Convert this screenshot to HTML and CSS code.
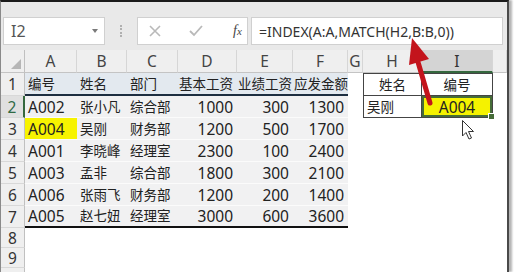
FILE: index.html
```html
<!DOCTYPE html>
<html lang="zh-CN">
<head>
    <meta charset="UTF-8">
    <meta name="viewport" content="width=device-width, initial-scale=1.0">
    <title>INDEX + MATCH</title>
    <link rel="stylesheet" href="styles.css">
</head>
<body>
<div class="window">
    <div class="formula-bar">
        <div class="name-box">
            <span>I2</span>
            <span class="drop"></span>
        </div>
        <div class="grip"></div>
        <div class="fx-buttons">
            <svg class="btn" width="12" height="12" viewBox="0 0 12 12">
                <path d="M1 1 L11 11 M11 1 L1 11" stroke="#b9b9b9" stroke-width="1.6"/>
            </svg>
            <svg class="btn" width="14" height="12" viewBox="0 0 14 12">
                <path d="M1 6 L5 10 L13 1" stroke="#b9b9b9" stroke-width="1.8" fill="none"/>
            </svg>
            <span class="fx"><i>f</i><i class="x">x</i></span>
        </div>
        <div class="formula">=INDEX(A:A,MATCH(H2,B:B,0))</div>
    </div>

    <div class="sheet">
        <div class="row colhead">
            <div class="corner"><span class="tri"></span></div>
            <div>A</div><div>B</div><div>C</div><div>D</div><div>E</div>
            <div>F</div><div>G</div><div>H</div><div class="active">I</div><div></div>
        </div>

        <div class="row r1">
            <div class="rh">1</div>
            <div class="hd cn">编号</div>
            <div class="hd cn">姓名</div>
            <div class="hd cn">部门</div>
            <div class="hd wide cn">基本工资</div>
            <div class="hd wide cn">业绩工资</div>
            <div class="hd wide cn">应发金额</div>
            <div></div>
            <div class="lk lk-l lk-t cn center">姓名</div>
            <div class="lk lk-t cn center">编号</div>
            <div></div>
        </div>

        <div class="row">
            <div class="rh current">2</div>
            <div class="t">A002</div>
            <div class="t cn">张小凡</div>
            <div class="t cn">综合部</div>
            <div class="t num">1000</div>
            <div class="t num">300</div>
            <div class="t num">1300</div>
            <div></div>
            <div class="lk lk-l cn">吴刚</div>
            <div class="lk sel center">A004</div>
            <div></div>
        </div>

        <div class="row">
            <div class="rh">3</div>
            <div class="t mark">A004</div>
            <div class="t cn">吴刚</div>
            <div class="t cn">财务部</div>
            <div class="t num">1200</div>
            <div class="t num">500</div>
            <div class="t num">1700</div>
            <div></div><div></div><div></div><div></div>
        </div>

        <div class="row">
            <div class="rh">4</div>
            <div class="t">A001</div>
            <div class="t cn">李晓峰</div>
            <div class="t cn">经理室</div>
            <div class="t num">2300</div>
            <div class="t num">100</div>
            <div class="t num">2400</div>
            <div></div><div></div><div></div><div></div>
        </div>

        <div class="row">
            <div class="rh">5</div>
            <div class="t">A003</div>
            <div class="t cn">孟非</div>
            <div class="t cn">综合部</div>
            <div class="t num">1800</div>
            <div class="t num">300</div>
            <div class="t num">2100</div>
            <div></div><div></div><div></div><div></div>
        </div>

        <div class="row">
            <div class="rh">6</div>
            <div class="t">A006</div>
            <div class="t cn">张雨飞</div>
            <div class="t cn">财务部</div>
            <div class="t num">1200</div>
            <div class="t num">200</div>
            <div class="t num">1400</div>
            <div></div><div></div><div></div><div></div>
        </div>

        <div class="row">
            <div class="rh">7</div>
            <div class="t last">A005</div>
            <div class="t last cn">赵七妞</div>
            <div class="t last cn">经理室</div>
            <div class="t last num">3000</div>
            <div class="t last num">600</div>
            <div class="t last num">3600</div>
            <div></div><div></div><div></div><div></div>
        </div>

        <div class="row r8"><div class="rh">8</div></div>
        <div class="row r9"><div class="rh">9</div></div>
        <div class="row r10"><div class="rh"></div></div>
    </div>

    <svg class="overlay" width="514" height="272" viewBox="0 0 514 272">
        <!-- red arrow pointing at the formula -->
        <line x1="430" y1="103" x2="418" y2="62" stroke="#c3141c" stroke-width="5" stroke-linecap="round"/>
        <polygon points="412,38 409,65 429,59" fill="#c3141c"/>
        <!-- mouse pointer -->
        <path d="M462.5 120.5 L462.5 136 L466 132.5 L469 139 L471.5 138 L468.5 131.5 L473.5 131.5 Z"
              fill="#fff" stroke="#333" stroke-width="1"/>
    </svg>
</div>
</body>
</html>
```

FILE: styles.css
```css
body {
    margin: 0;
    background: #fff;
    font-family: 'Noto Sans', 'Noto Sans CJK SC', sans-serif;
}
.window {
    position: relative;
    width: 506px;
    height: 270px;
    border-top: 2px solid #1b1b1b;
    border-left: 1px solid #8a8a8a;
    border-right: 2px solid #4a4a4a;
    box-shadow: 3px 0 2px #b4b4b4;
    overflow: hidden;
    background: #fff;
}

/* formula bar */
.formula-bar {
    display: flex;
    align-items: stretch;
    height: 28px;
    padding: 15px 4px 5px 2px;
    background: #e9e9e9;
}
.name-box {
    width: 102px;
    box-sizing: border-box;
    display: flex;
    align-items: center;
    justify-content: space-between;
    padding: 0 6px 0 7px;
    background: #fff;
    border: 1px solid #d0d0d0;
    font-size: 16px;
    color: #555;
}
.drop {
    width: 0;
    height: 0;
    border-left: 3px solid transparent;
    border-right: 3px solid transparent;
    border-top: 4px solid #7a7a7a;
}
.grip {
    width: 0;
    height: 12px;
    margin: 8px 15px 0 15px;
    border-left: 2px dotted #b0b0b0;
}
.fx-buttons {
    width: 111px;
    box-sizing: border-box;
    display: flex;
    align-items: center;
    padding-left: 11px;
    background: #fff;
    border: 1px solid #d0d0d0;
}
.btn {
    margin-right: 28px;
}
.fx {
    font-family: 'Liberation Serif', serif;
    font-size: 14px;
    color: #444;
    margin-left: 2px;
}
.fx .x {
    font-size: 11px;
}
.formula {
    flex: 1;
    margin-left: 3px;
    padding-left: 7px;
    display: flex;
    align-items: center;
    background: #fff;
    border: 1px solid #d0d0d0;
    font-size: 14px;
    color: #333;
}

/* grid */
.row {
    display: grid;
    grid-template-columns: 24px 52px 50px 51px 59px 56px 55px 15px 59px 71px 1fr;
    height: 22px;
}
.row > div {
    box-sizing: border-box;
    display: flex;
    align-items: center;
    padding: 0 3px;
    white-space: nowrap;
    overflow: hidden;
    font-size: 15.5px;
    line-height: 18px;
    color: #222;
}
.colhead {
    height: 23px;
}
.colhead > div {
    justify-content: center;
    background: #efefef;
    border-right: 1px solid #d6d6d6;
    border-bottom: 1px solid #c4c4c4;
    color: #444;
}
.colhead > div.active {
    background: #d4d4d4;
    border-bottom: 2px solid #35683e;
    color: #333;
}
.row > div.corner {
    justify-content: flex-end;
    align-items: flex-end;
    padding: 0 3px 3px 0;
    border-right: 1px solid #c0c0c0;
}
.tri {
    width: 0;
    height: 0;
    border-left: 10px solid transparent;
    border-bottom: 10px solid #b6b6b6;
}
.row > div.rh {
    justify-content: center;
    padding: 0;
    background: #efefef;
    border-right: 1px solid #c0c0c0;
    border-bottom: 1px solid #d8d8d8;
    color: #333;
}
.row > div.rh.current {
    background: #e0e0e0;
    border-right: 2px solid #35683e;
    color: #2f6a45;
}
.r1 {
    height: 23px;
}
.r8,
.r9 {
    height: 20px;
}
.r10 {
    height: 22px;
}

/* data table A1:F7 */
.row > div.cn {
    font-size: 13.5px;
}
.row > div.hd {
    background: #e3e9ef;
    border-bottom: 2px solid #1d2e40;
    padding: 0 0 0 3px;
}
.row > div.hd.wide {
    padding-left: 1px;
}
.row > div.t {
    background: #f1f1f2;
    border-bottom: 1px solid #fbfbfb;
}
.row > div.num {
    justify-content: flex-end;
    padding-right: 4px;
}
.row > div.mark {
    background: #f7f300;
}
.row > div.last {
    border-bottom: 2px solid #111;
}

/* lookup H1:I2 */
.row > div.lk {
    border-right: 1px solid #444;
    border-bottom: 1px solid #444;
}
.row > div.lk-l {
    border-left: 1px solid #444;
}
.row > div.lk-t {
    border-top: 1px solid #444;
}
.row > div.center {
    justify-content: center;
}
.row > div.sel {
    position: relative;
    overflow: visible;
    background: #f5f200;
    box-shadow: inset 0 0 0 2px #466c38;
}
.sel::after {
    content: "";
    position: absolute;
    right: -3px;
    bottom: -3px;
    width: 5px;
    height: 5px;
    background: #466c38;
    border: 1px solid #fff;
}

.overlay {
    position: absolute;
    top: -2px;
    left: -1px;
    pointer-events: none;
}
```
